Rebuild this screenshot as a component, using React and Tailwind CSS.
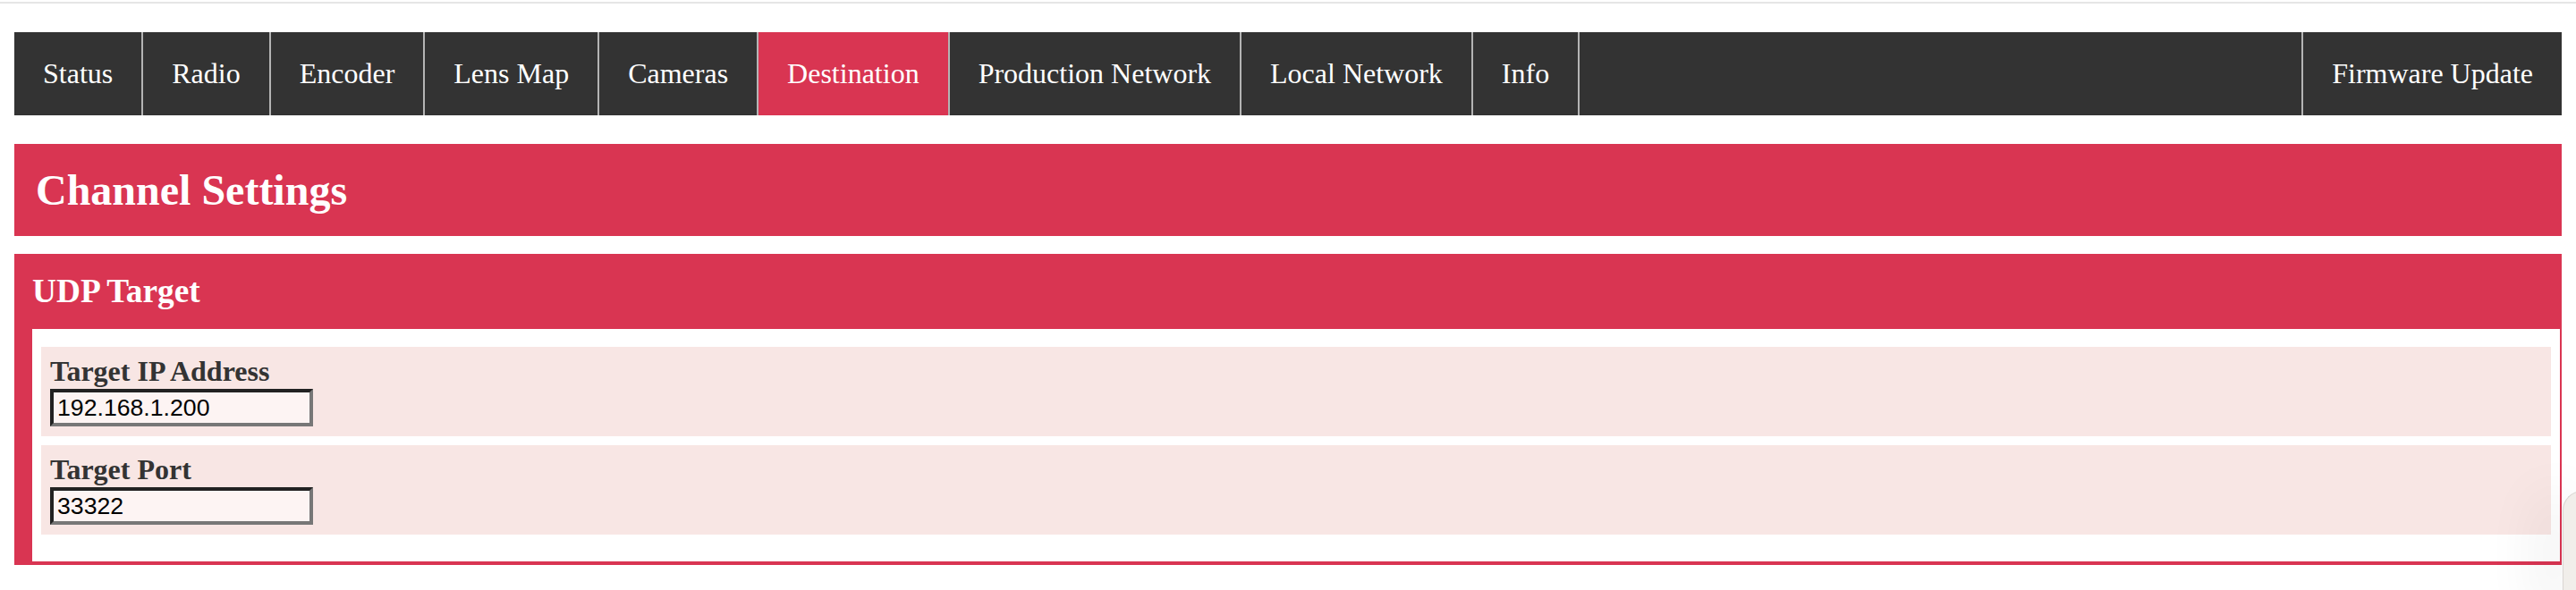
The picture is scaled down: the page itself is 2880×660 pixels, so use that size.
const tabs = ["Status", "Radio", "Encoder", "Lens Map", "Cameras", "Destination", "Production Network", "Local Network", "Info"];

function NavBar({ active }) {
  return (
    <nav className="flex bg-[#333333] text-white text-[32px] leading-[37px]">
      {tabs.map((t) => (
        <a
          key={t}
          className={
            t === active
              ? "block px-8 py-7 border-r-2 border-[#b4b4b4] bg-[#d93552] whitespace-nowrap"
              : "block px-8 py-7 border-r-2 border-[#b4b4b4] whitespace-nowrap"
          }
        >
          {t}
        </a>
      ))}
      <div className="flex-1" />
      <a className="block px-8 py-7 border-l-2 border-[#b4b4b4] whitespace-nowrap">Firmware Update</a>
    </nav>
  );
}

function Field({ label, value }) {
  return (
    <div className="bg-[#f8e6e4] h-[100px] pt-[9px] px-[10px]">
      <label className="block font-bold text-[32px] leading-[37px] text-[#333333]">{label}</label>
      <input
        defaultValue={value}
        className="block w-[294px] h-[42px] mt-px px-1 bg-[#fdf4f3] text-black text-[26.67px] border-4 border-t-[#222222] border-l-[#222222] border-b-[#777777] border-r-[#777777] outline-none"
        style={{ fontFamily: '"Liberation Sans", Arial, sans-serif' }}
      />
    </div>
  );
}

export default function App() {
  return (
    <div className="relative w-[2880px] h-[660px] bg-white overflow-hidden" style={{ fontFamily: '"Liberation Serif", "Times New Roman", serif' }}>
      <div className="mt-[2px] h-[2px] bg-[#e6e6e6]" />
      <div className="px-4 pt-8">
        <NavBar active="Destination" />

        <div className="mt-8 bg-[#d93552] px-6 py-6">
          <h1 className="text-white font-bold text-[48px] leading-[55px]">Channel Settings</h1>
        </div>

        <div className="mt-5 bg-[#d93552] pb-1">
          <h3 className="text-white font-bold text-[37.33px] leading-[44px] px-5 py-5">UDP Target</h3>
          <div className="ml-5 mr-[2px] bg-white pt-5 px-[10px] pb-[30px] flex flex-col gap-[10px]">
            <Field label="Target IP Address" value="192.168.1.200" />
            <Field label="Target Port" value="33322" />
          </div>
        </div>
      </div>

      {/* browser side widget peeking in */}
      <div className="absolute left-[2865px] top-[549px] w-[40px] h-[140px] bg-[#f1eeea] rounded-tl-[22px] border-l border-t border-[#d9d6d2] shadow-[-30px_0_60px_rgba(0,0,0,0.06)]" />
    </div>
  );
}
